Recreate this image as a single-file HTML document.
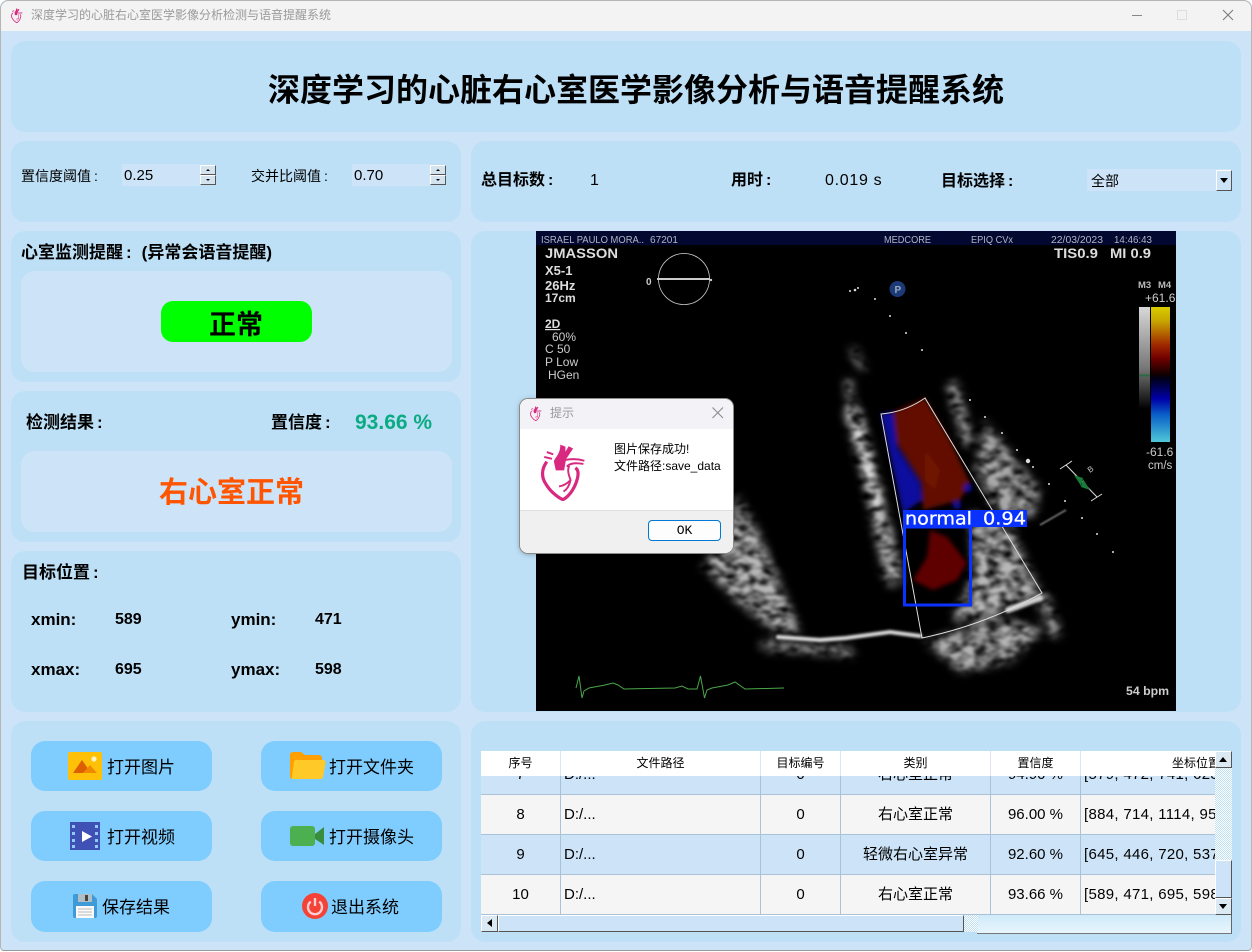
<!DOCTYPE html>
<html lang="zh"><head><meta charset="utf-8"><title>深度学习的心脏右心室医学影像分析检测与语音提醒系统</title>
<style>
*{box-sizing:border-box}
html,body{margin:0;padding:0;width:1252px;height:952px;overflow:hidden;background:#fff}
body{font-family:"Liberation Sans","Noto Sans CJK SC",sans-serif;color:#000;position:relative}
.a{position:absolute}
.win{position:absolute;left:0;top:0;width:1252px;height:951px;background:#cde4f8;border:1px solid #b5b5b5;border-bottom-color:#999;border-radius:8px 8px 4px 4px;overflow:hidden}
.p{position:absolute;background:#bee0f6;border-radius:14px}
.in{position:absolute;background:#cde4f8;border-radius:14px}
.t{position:absolute;white-space:nowrap;line-height:20px;height:20px}
.b{font-weight:bold}
.col{margin-left:3px}
.btn{position:absolute;width:181px;height:50px;background:#7fcdff;border-radius:14px}
.spin{position:absolute;width:78px;height:22px;background:#cde4f8}
.sb{position:absolute;width:16px;height:10px;background:#d4e4ef;border:1px solid;border-color:#fff #555 #555 #fff}
.sb i,.arr{position:absolute;width:0;height:0}
.h{position:absolute;top:751px;height:25px;background:#fff;border-right:1px solid #dde6ee;font-size:12px;line-height:24px;text-align:center}
.c{position:absolute;font-size:15px;line-height:40px;height:40px;text-align:center;white-space:nowrap;overflow:hidden;border-right:1px solid #a9c2d8;border-bottom:1px solid #a9c2d8}
.l{text-align:left;padding-left:3px}
.pos{letter-spacing:.3px;border-right:0}
.bl{background:#cde4f8}.gr{background:#f5f5f5}
.bev{position:absolute;background:#cde4f8;border:1px solid;border-color:#fff #555 #555 #fff}
.dit{position:absolute;background:repeating-conic-gradient(#fff 0 25%,#bee0f6 0 50%) 0 0/2px 2px}
</style></head><body>
<svg width="0" height="0" style="position:absolute"><defs>
<symbol id="heart" viewBox="90 155 140 180">
<path d="M108 213C92 235 90 260 105 282C118 304 140 323 158 331C180 320 198 290 204 262C207 246 205 238 197 232" fill="none" stroke="#d9287f" stroke-width="10"/>
<path d="M150 160L166 166L166 182L176 165L190 172L168 205L162 240L136 240L130 212C136 196 150 190 150 160Z" fill="#d9287f"/>
<path d="M163 208C185 203 205 204 225 210M170 228C182 216 200 216 222 220M178 226C170 240 178 258 182 270C178 288 170 300 160 306M180 272C170 282 158 288 146 290M108 183L128 190M100 198L124 204" fill="none" stroke="#d9287f" stroke-width="6"/>
</symbol></defs></svg>
<div class="win"></div>
<div class="a" style="left:1px;top:1px;width:1250px;height:30px;background:#f3f3f3;border-radius:8px 8px 0 0"></div>
<svg class="a" style="left:11px;top:8px" width="12" height="15"><use href="#heart" width="12" height="15"/></svg>
<div class="t" style="left:31px;top:5px;font-size:12px;color:#9a9a9a">深度学习的心脏右心室医学影像分析检测与语音提醒系统</div>
<svg class="a" style="left:1120px;top:0" width="125" height="31" fill="none"><path d="M12 15.5H22" stroke="#888"/><rect x="57.5" y="10.5" width="9" height="9" stroke="#ddd"/><path d="M103 10L113 20M113 10L103 20" stroke="#777"/></svg>

<div class="p" style="left:11px;top:41px;width:1230px;height:91px"></div>
<div class="t b" style="left:268px;top:70px;font-size:32px;line-height:40px;height:40px">深度学习的心脏右心室医学影像分析与语音提醒系统</div>

<div class="p" style="left:11px;top:141px;width:450px;height:81px"></div>
<div class="t" style="left:21px;top:166px;font-size:14px">置信度阈值<span style="margin-left:3px">:</span></div>
<div class="spin" style="left:122px;top:164px"></div>
<div class="t" style="left:124px;top:166px;font-size:15px">0.25</div>
<div class="sb" style="left:200px;top:165px"><i style="left:5px;top:3px;border:2px solid transparent;border-top:0;border-bottom:2px solid #000"></i></div>
<div class="sb" style="left:200px;top:175px"><i style="left:5px;top:3px;border:2px solid transparent;border-bottom:0;border-top:2px solid #000"></i></div>
<div class="t" style="left:251px;top:166px;font-size:14px">交并比阈值<span style="margin-left:3px">:</span></div>
<div class="spin" style="left:352px;top:164px"></div>
<div class="t" style="left:354px;top:166px;font-size:15px">0.70</div>
<div class="sb" style="left:430px;top:165px"><i style="left:5px;top:3px;border:2px solid transparent;border-top:0;border-bottom:2px solid #000"></i></div>
<div class="sb" style="left:430px;top:175px"><i style="left:5px;top:3px;border:2px solid transparent;border-bottom:0;border-top:2px solid #000"></i></div>

<div class="p" style="left:471px;top:141px;width:770px;height:81px"></div>
<div class="t b" style="left:481px;top:171px;font-size:16px">总目标数<span class="col">:</span></div>
<div class="t" style="left:590px;top:171px;font-size:16px">1</div>
<div class="t b" style="left:731px;top:171px;font-size:16px">用时<span class="col">:</span></div>
<div class="t" style="left:825px;top:171px;font-size:16px;letter-spacing:.7px">0.019 s</div>
<div class="t b" style="left:941px;top:172px;font-size:16px">目标选择<span class="col">:</span></div>
<div class="a" style="left:1087px;top:169px;width:145px;height:22px;background:#cde4f8"></div>
<div class="t" style="left:1091px;top:171px;font-size:14px">全部</div>
<div class="bev" style="left:1216px;top:170px;width:16px;height:21px;background:#cde4f8"><i class="arr" style="left:3px;top:7px;border:4px solid transparent;border-bottom:0;border-top:5px solid #000"></i></div>

<div class="p" style="left:11px;top:231px;width:450px;height:151px"></div>
<div class="t b" style="left:21px;top:243px;font-size:17px">心室监测提醒<span style="margin-left:3px">:</span><span style="display:inline-block;width:10px"></span>(异常会语音提醒)</div>
<div class="in" style="left:21px;top:271px;width:431px;height:101px"></div>
<div class="a" style="left:161px;top:301px;width:151px;height:41px;background:#0f0;border-radius:12px"></div>
<div class="t b" style="left:209px;top:310px;font-size:27px;line-height:30px;height:30px">正常</div>

<div class="p" style="left:11px;top:391px;width:450px;height:151px"></div>
<div class="t b" style="left:26px;top:413px;font-size:17px">检测结果<span class="col">:</span></div>
<div class="t b" style="left:271px;top:413px;font-size:17px">置信度<span class="col">:</span></div>
<div class="t b" style="left:355px;top:413px;font-size:21px;color:#0aab83">93.66 %</div>
<div class="in" style="left:21px;top:451px;width:431px;height:81px"></div>
<div class="t b" style="left:159px;top:478px;font-size:29px;line-height:30px;height:30px;color:#ff5500">右心室正常</div>

<div class="p" style="left:11px;top:551px;width:450px;height:161px"></div>
<div class="t b" style="left:22px;top:563px;font-size:17px">目标位置<span class="col">:</span></div>
<div class="t b" style="left:31px;top:610px;font-size:17px">xmin:</div>
<div class="t b" style="left:115px;top:610px;font-size:16px">589</div>
<div class="t b" style="left:231px;top:610px;font-size:17px">ymin:</div>
<div class="t b" style="left:315px;top:610px;font-size:16px">471</div>
<div class="t b" style="left:31px;top:660px;font-size:17px">xmax:</div>
<div class="t b" style="left:115px;top:660px;font-size:16px">695</div>
<div class="t b" style="left:231px;top:660px;font-size:17px">ymax:</div>
<div class="t b" style="left:315px;top:660px;font-size:16px">598</div>

<div class="p" style="left:471px;top:231px;width:770px;height:481px"></div>
<svg class="a" style="left:536px;top:231px" width="640" height="480" viewBox="536 231 640 480" font-family="Liberation Sans,sans-serif">
<defs>
<filter id="sp" x="536" y="231" width="640" height="480" filterUnits="userSpaceOnUse" color-interpolation-filters="sRGB">
<feGaussianBlur in="SourceGraphic" stdDeviation="4.500" result="b"/>
<feTurbulence type="fractalNoise" baseFrequency="0.08 0.14" numOctaves="2" seed="4" result="n"/>
<feColorMatrix in="n" type="matrix" values="0 0 0 0 1 0 0 0 0 1 0 0 0 0 1 2.200 0 0 0 -0.450" result="m"/>
<feComposite in="b" in2="m" operator="in" result="c"/>
<feGaussianBlur in="c" stdDeviation="1.200"/>
</filter>
<filter id="bl"><feGaussianBlur stdDeviation="2.200"/></filter>
<filter id="bl2"><feGaussianBlur stdDeviation=".8"/></filter>
<filter id="bl3"><feGaussianBlur stdDeviation="1.300"/></filter>
<linearGradient id="gbar" x1="0" y1="0" x2="0" y2="1"><stop offset="0" stop-color="#d8d8d8"/><stop offset=".6" stop-color="#777"/><stop offset="1" stop-color="#000"/></linearGradient>
<linearGradient id="cbar" x1="0" y1="0" x2="0" y2="1"><stop offset="0" stop-color="#d8cc00"/><stop offset=".1" stop-color="#c8a800"/><stop offset=".28" stop-color="#a02800"/><stop offset=".38" stop-color="#700000"/><stop offset=".5" stop-color="#100000"/><stop offset=".53" stop-color="#000018"/><stop offset=".68" stop-color="#0000a8"/><stop offset=".8" stop-color="#0a60c8"/><stop offset="1" stop-color="#50c8d8"/></linearGradient>
</defs>
<rect x="536" y="231" width="640" height="480" fill="#000"/>
<rect x="536" y="231" width="640" height="14" fill="#020830"/>
<g filter="url(#sp)" fill="none" stroke-linecap="round" stroke-linejoin="round">
<path d="M848 382L853 413" stroke="#b0b0b0" stroke-width="7"/>
<path d="M853 413L867 463L880 517" stroke="#e8e8e8" stroke-width="15"/>
<path d="M880 517L893 577" stroke="#c0c0c0" stroke-width="17"/>
<path d="M853 350L862 368" stroke="#aaa" stroke-width="6"/>
<path d="M737 495L755 525L775 570L800 632L775 632L735 600L702 565L722 545Z" fill="#b8b8b8" stroke="none"/>
<path d="M765 645L850 652" stroke="#aaa" stroke-width="9"/>
<path d="M925 642L960 672L1010 662L1045 628L1000 618Z" fill="#b4b4b4" stroke="none"/>
<path d="M1042 597L1055 632" stroke="#aaa" stroke-width="11"/>
<path d="M953 387L967 440" stroke="#b0b0b0" stroke-width="11"/>
<path d="M985 420L1000 440L1040 490L1035 515L1000 520L975 470Z" fill="#a8a8a8" stroke="none"/>
<path d="M970 512L1010 525L1040 592L985 620L952 620L974 575Z" fill="#b8b8b8" stroke="none"/>
</g>
<g filter="url(#bl3)" fill="none" stroke-linecap="round">
<path d="M778 637L820 640L846 638L890 632L920 636" stroke="#e0e0e0" stroke-width="4"/>
<path d="M1008 610L1040 598" stroke="#d0d0d0" stroke-width="6"/>
</g>
<path d="M1040 525L1066 510" stroke="#666" stroke-width="2" filter="url(#bl2)"/>
<g filter="url(#bl)">
<path d="M881 414L893 412L897 447L920 483L922 500L903 513Z" fill="#0a0f9e"/>
<path d="M893 412L925 398L950 440L970 483L960 500L923 510L922 483L897 443Z" fill="#620c06"/>
<path d="M925 450L940 470L935 490L925 480Z" fill="#701806"/>
<path d="M930 530L947 537L967 563L957 580L933 590L913 580L927 557Z" fill="#5e0606"/>
<circle cx="968" cy="488" r="4" fill="#0a0fa0"/><circle cx="957" cy="505" r="4" fill="#0a0fa0"/>
</g>
<path d="M881 414Q905 412 925 398L1042 593Q985 625 922 638Z" fill="none" stroke="#ddd" stroke-width="1"/>
<rect x="904.5" y="527" width="66" height="78" fill="none" stroke="#0a32ff" stroke-width="3"/>
<rect x="903" y="510" width="124" height="17" fill="#0a32ff"/>
<g font-family="DejaVu Sans,sans-serif" font-size="18" fill="#fff" stroke="#fff" stroke-width=".3"><text x="905" y="524.500" textLength="67" lengthAdjust="spacingAndGlyphs">normal</text><text x="983" y="524.500" textLength="43" lengthAdjust="spacingAndGlyphs">0.94</text></g>
<g fill="#ddd">
<circle cx="970" cy="400" r="1"/><circle cx="985" cy="417" r="1"/><circle cx="1002" cy="433" r="1"/><circle cx="1017" cy="450" r="1"/><circle cx="1028" cy="461" r="2.2"/><circle cx="1033" cy="467" r="1"/><circle cx="1049" cy="484" r="1"/><circle cx="1065" cy="501" r="1"/><circle cx="1082" cy="518" r="1"/><circle cx="1097" cy="534" r="1"/><circle cx="1113" cy="552" r="1"/>
<circle cx="858" cy="288" r="1"/><circle cx="855" cy="290" r="1.3"/><circle cx="850" cy="291" r="1"/><circle cx="875" cy="299" r="1"/><circle cx="890" cy="316" r="1"/><circle cx="906" cy="333" r="1"/><circle cx="922" cy="350" r="1"/>
</g>
<g stroke="#ddd" fill="none"><path d="M1066 465L1097 497M1060 469L1072 461M1091 501L1102 494"/></g>
<path d="M1074 475L1083 478L1081 486ZM1090 490L1081 487L1083 479Z" fill="#1a7a3a"/>
<text x="1087" y="472" font-size="8" fill="#ccc" transform="rotate(-35 1090 468)">B</text>
<circle cx="684" cy="279" r="25.5" fill="none" stroke="#ccc" stroke-width=".8"/>
<path d="M657 279H710" stroke="#ccc" stroke-width="2"/><circle cx="711" cy="280" r="1.2" fill="#ccc"/>
<text x="646" y="285" font-size="10" font-weight="bold" fill="#ccc">0</text>
<circle cx="897.5" cy="289" r="8" fill="#1c3a78"/><text x="894.5" y="293" font-size="10" font-weight="bold" fill="#9ab">P</text>
<g fill="#b4b4c4" font-size="10"><text x="541" y="243" textLength="103" lengthAdjust="spacingAndGlyphs">ISRAEL PAULO MORA..</text><text x="650" y="243" textLength="28" lengthAdjust="spacingAndGlyphs">67201</text><text x="884" y="243" textLength="47" lengthAdjust="spacingAndGlyphs">MEDCORE</text><text x="971" y="243" textLength="42" lengthAdjust="spacingAndGlyphs">EPIQ CVx</text><text x="1051" y="243" textLength="52" lengthAdjust="spacingAndGlyphs">22/03/2023</text><text x="1114" y="243" textLength="38" lengthAdjust="spacingAndGlyphs">14:46:43</text></g>
<g fill="#ddd" font-weight="bold">
<text x="545" y="258" font-size="14" textLength="73" lengthAdjust="spacingAndGlyphs">JMASSON</text>
<text x="545" y="275" font-size="13">X5-1</text><text x="545" y="290" font-size="13">26Hz</text><text x="545" y="302" font-size="12">17cm</text>
<text x="545" y="328" font-size="12" text-decoration="underline">2D</text>
<text x="1054" y="258" font-size="14" textLength="44" lengthAdjust="spacingAndGlyphs">TIS0.9</text><text x="1110" y="258" font-size="14" textLength="41" lengthAdjust="spacingAndGlyphs">MI 0.9</text>
<text x="1126" y="695" font-size="12" fill="#ccc" textLength="43" lengthAdjust="spacingAndGlyphs">54 bpm</text>
</g>
<g fill="#ccc" font-size="12"><text x="552" y="341">60%</text><text x="545" y="353">C 50</text><text x="545" y="366">P Low</text><text x="548" y="379">HGen</text>
<text x="1145" y="302">+61.6</text><text x="1146" y="456">-61.6</text><text x="1148" y="469" font-size="11.5">cm/s</text></g>
<text x="1138" y="288" font-size="9.5" font-weight="bold" fill="#bbb">M3</text><text x="1158" y="288" font-size="9.5" font-weight="bold" fill="#bbb">M4</text>
<rect x="1139" y="307" width="11" height="102" fill="url(#gbar)"/>
<rect x="1139" y="374.5" width="11" height="2" fill="#2a6a44"/>
<rect x="1151" y="307" width="19" height="135" fill="url(#cbar)"/>
<path d="M576 688L579 676L582 698L584 691L589 688L605 685L613 683L618 685L624 689L675 688L682 686L688 689L697 689L700.5 676L704.5 698L707 690L712 688L728 685L735 682L745 689L784 688" fill="none" stroke="#4aa64a" stroke-width="1"/>
</svg>

<!-- dialog -->
<div class="a" style="left:520px;top:399px;width:213px;height:154px;background:#fff;border-radius:8px;overflow:hidden;box-shadow:0 0 0 1px #8b8b8b,0 1px 6px rgba(0,0,0,.35)">
<div class="a" style="left:0;top:0;width:213px;height:30px;background:#f2f2f7"></div>
<div class="a" style="left:0;top:111px;width:213px;height:43px;background:#f0f0f0;border-top:1px solid #dfdfdf"></div>
<svg class="a" style="left:10px;top:7px" width="12" height="15"><use href="#heart" width="12" height="15"/></svg>
<div class="t" style="left:30px;top:4px;font-size:12px;color:#999">提示</div>
<svg class="a" style="left:192px;top:8px" width="12" height="12" fill="none"><path d="M.5 .5L11 11M11 .5L.5 11" stroke="#888"/></svg>
<svg class="a" style="left:21px;top:44px" width="45" height="58"><use href="#heart" width="45" height="58"/></svg>
<div class="t" style="left:94px;top:40px;font-size:12px">图片保存成功!</div>
<div class="t" style="left:94px;top:57px;font-size:12px">文件路径:save_data</div>
<div class="a" style="left:128px;top:121px;width:73px;height:21px;background:#fdfdfd;border:1px solid #0078d4;border-radius:4px;text-align:center;font:13px/19px 'Liberation Mono',monospace">OK</div>
</div>

<!-- buttons -->
<div class="p" style="left:11px;top:721px;width:450px;height:221px"></div>
<div class="btn" style="left:31px;top:741px"></div><div class="btn" style="left:261px;top:741px"></div>
<div class="btn" style="left:31px;top:811px"></div><div class="btn" style="left:261px;top:811px"></div>
<div class="btn" style="left:31px;top:881px;height:51px"></div><div class="btn" style="left:261px;top:881px;height:51px"></div>
<svg class="a" style="left:68px;top:752px" width="34" height="28"><rect width="34" height="28" rx="2" fill="#ffc107"/><circle cx="26" cy="7" r="2.6" fill="#fff3c4"/><path d="M5 21L14 8L23 21Z" fill="#dd5f00"/><path d="M15 21L22 13L29 21Z" fill="#ef8a00"/></svg>
<div class="t" style="left:107px;top:758px;font-size:17px">打开图片</div>
<svg class="a" style="left:290px;top:752px" width="36" height="28"><path d="M0 3Q0 0 3 0H11L15 3H29Q32 3 32 6V27H3Q0 27 0 24Z" fill="#ffa000"/><path d="M6 8H33Q36 8 35.500 11L33 25Q32.500 27 30 27H3Q1 27 2 24L4 10Q4.400 8 6 8Z" fill="#ffca28"/></svg>
<div class="t" style="left:329px;top:758px;font-size:17px">打开文件夹</div>
<svg class="a" style="left:70px;top:822px" width="30" height="28"><rect width="30" height="28" fill="#3f51b5"/><g fill="#90caf9"><rect x="2" y="3" width="3" height="3"/><rect x="2" y="10" width="3" height="3"/><rect x="2" y="17" width="3" height="3"/><rect x="2" y="23" width="3" height="3"/><rect x="25" y="3" width="3" height="3"/><rect x="25" y="10" width="3" height="3"/><rect x="25" y="17" width="3" height="3"/><rect x="25" y="23" width="3" height="3"/></g><path d="M12 9L22 14.500L12 20Z" fill="#fff"/></svg>
<div class="t" style="left:107px;top:828px;font-size:17px">打开视频</div>
<svg class="a" style="left:290px;top:826px" width="34" height="20"><rect width="25" height="20" rx="3" fill="#4caf50"/><path d="M25 8L34 1V19L25 13Z" fill="#388e3c"/></svg>
<div class="t" style="left:329px;top:828px;font-size:17px">打开摄像头</div>
<svg class="a" style="left:73px;top:894px" width="24" height="24"><path d="M0 2Q0 0 2 0H19L24 5V22Q24 24 22 24H2Q0 24 0 22Z" fill="#3f9ad8"/><rect x="5" y="0" width="14" height="8" fill="#b0bec5"/><rect x="12" y="1" width="3" height="6" fill="#444"/><rect x="3" y="12" width="18" height="12" fill="#fafafa"/><path d="M5 15H19M5 18H19M5 21H19" stroke="#bbb"/></svg>
<div class="t" style="left:102px;top:898px;font-size:17px">保存结果</div>
<svg class="a" style="left:302px;top:893px" width="26" height="26" fill="none"><circle cx="13" cy="13" r="13" fill="#f44336"/><path d="M8.800 8.600A7 7 0 1 0 17.200 8.600" stroke="#ffcdd2" stroke-width="2.400"/><path d="M13 5V13" stroke="#ffcdd2" stroke-width="2.400"/></svg>
<div class="t" style="left:331px;top:898px;font-size:17px">退出系统</div>

<!-- table -->
<div class="p" style="left:471px;top:721px;width:770px;height:221px"></div>
<div class="a" style="left:481px;top:755px;width:734px;height:160px;overflow:hidden;background:#cde4f8">
<div class="c bl" style="left:0;top:0;width:80px">7</div><div class="c l bl" style="left:80px;top:0;width:200px">D:/...</div><div class="c bl" style="left:280px;top:0;width:80px">0</div><div class="c bl" style="left:360px;top:0;width:150px">右心室正常</div><div class="c bl" style="left:510px;top:0;width:90px">94.90 %</div><div class="c l bl pos" style="left:600px;top:0;width:134px">[579, 472, 741, 623]</div>
<div class="c gr" style="left:0;top:40px;width:80px">8</div><div class="c l gr" style="left:80px;top:40px;width:200px">D:/...</div><div class="c gr" style="left:280px;top:40px;width:80px">0</div><div class="c gr" style="left:360px;top:40px;width:150px">右心室正常</div><div class="c gr" style="left:510px;top:40px;width:90px">96.00 %</div><div class="c l gr pos" style="left:600px;top:40px;width:134px">[884, 714, 1114, 950]</div>
<div class="c bl" style="left:0;top:80px;width:80px">9</div><div class="c l bl" style="left:80px;top:80px;width:200px">D:/...</div><div class="c bl" style="left:280px;top:80px;width:80px">0</div><div class="c bl" style="left:360px;top:80px;width:150px">轻微右心室异常</div><div class="c bl" style="left:510px;top:80px;width:90px">92.60 %</div><div class="c l bl pos" style="left:600px;top:80px;width:134px">[645, 446, 720, 537]</div>
<div class="c gr" style="left:0;top:120px;width:80px">10</div><div class="c l gr" style="left:80px;top:120px;width:200px">D:/...</div><div class="c gr" style="left:280px;top:120px;width:80px">0</div><div class="c gr" style="left:360px;top:120px;width:150px">右心室正常</div><div class="c gr" style="left:510px;top:120px;width:90px">93.66 %</div><div class="c l gr pos" style="left:600px;top:120px;width:134px">[589, 471, 695, 598]</div>
</div>
<div class="h" style="left:481px;width:80px">序号</div><div class="h" style="left:561px;width:200px">文件路径</div><div class="h" style="left:761px;width:80px">目标编号</div><div class="h" style="left:841px;width:150px">类别</div><div class="h" style="left:991px;width:90px">置信度</div>
<div class="a" style="left:1081px;top:751px;width:134px;height:25px;background:#fff;overflow:hidden;font-size:12px;line-height:24px"><span style="position:absolute;left:91px;white-space:nowrap">坐标位置</span></div>
<div class="dit" style="left:1215px;top:767px;width:17px;height:93px"></div>
<div class="a" style="left:1215px;top:860px;width:17px;height:38px;background:#cde4f8;border:1px solid;border-color:#fff #555 #555 #fff"></div>
<div class="bev" style="left:1215px;top:751px;width:17px;height:17px;background:#dbe9f3"><i class="arr" style="left:3px;top:5px;border:4px solid transparent;border-top:0;border-bottom:5px solid #000"></i></div>
<div class="bev" style="left:1215px;top:898px;width:17px;height:17px;background:#dbe9f3"><i class="arr" style="left:3px;top:5px;border:4px solid transparent;border-bottom:0;border-top:5px solid #000"></i></div>
<div class="a" style="left:977px;top:915px;width:255px;height:19px;background:linear-gradient(#cfeaf9,#e8f5fc);border-right:1px solid #666;border-bottom:1px solid #777"></div>
<div class="dit" style="left:964px;top:915px;width:14px;height:17px"></div>
<div class="bev" style="left:481px;top:915px;width:17px;height:17px;background:#dbe9f3"><i class="arr" style="left:5px;top:3px;border:4px solid transparent;border-left:0;border-right:5px solid #000"></i></div>
<div class="bev" style="left:498px;top:915px;width:466px;height:17px;background:#cde4f8"></div>
</body></html>
